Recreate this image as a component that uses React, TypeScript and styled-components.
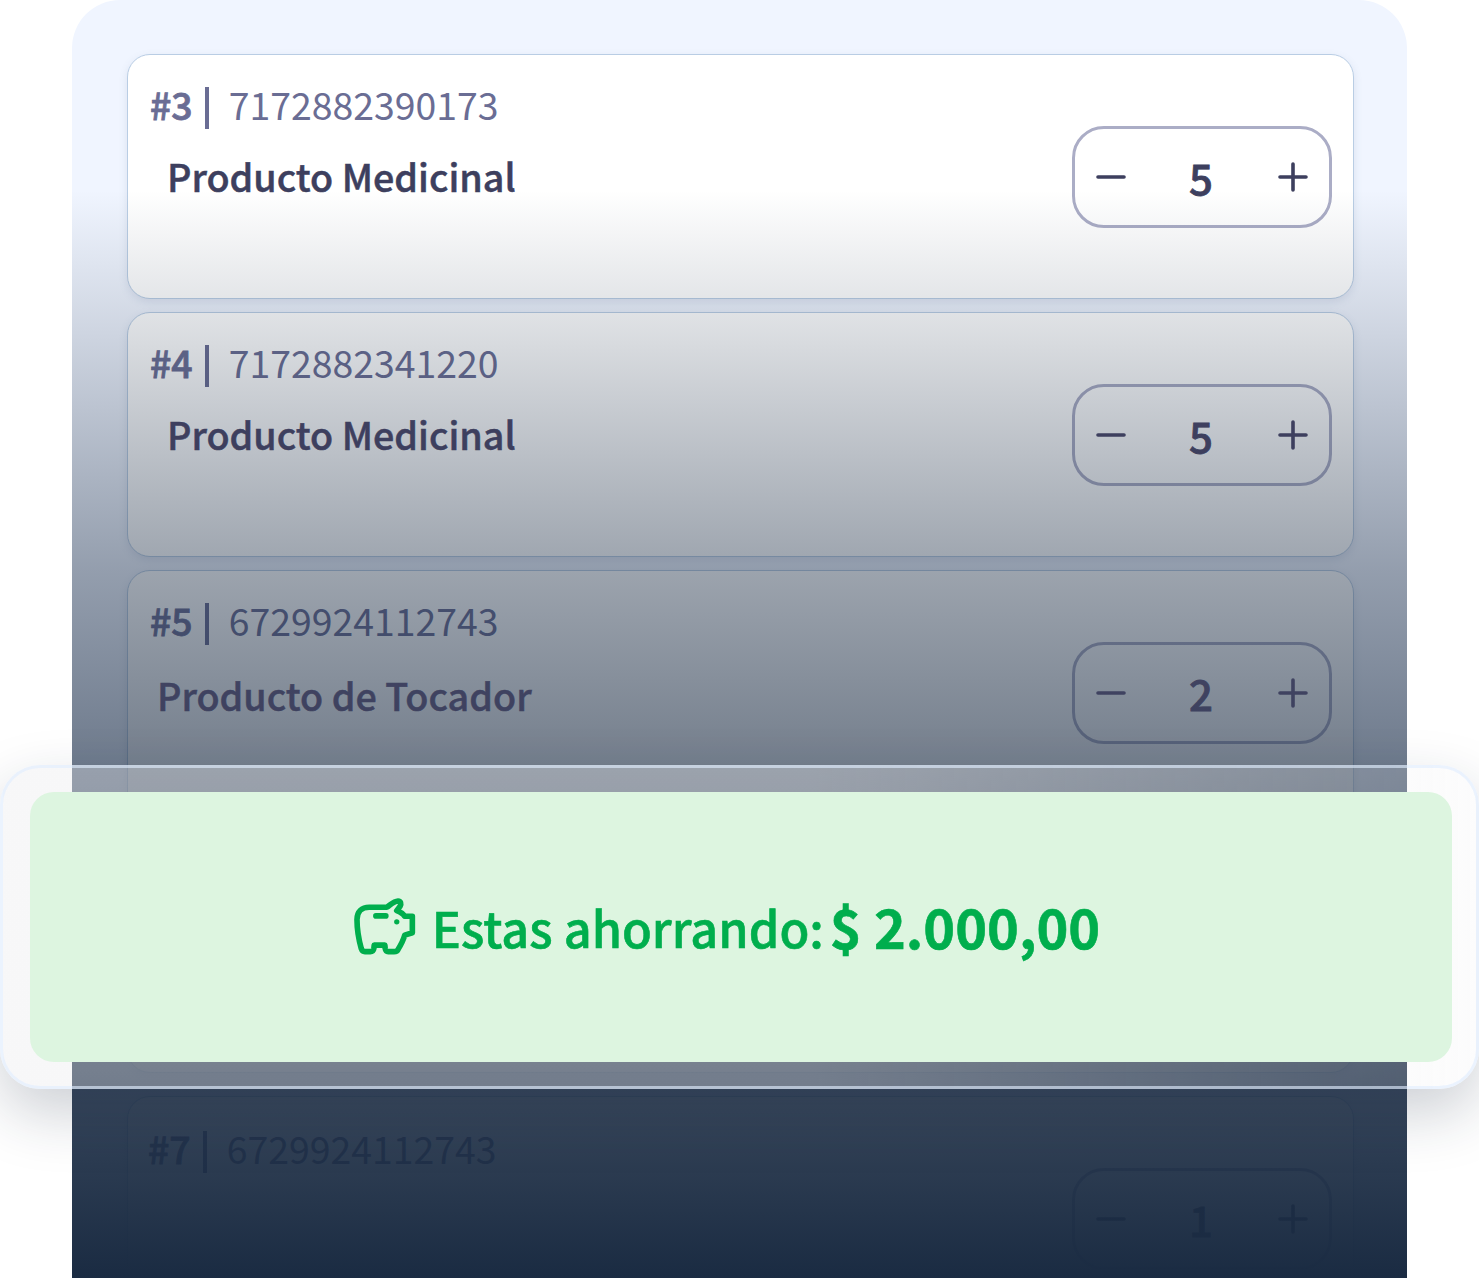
import React from "react";
import styled, { createGlobalStyle } from "styled-components";

const Global = createGlobalStyle`
  html, body { margin: 0; padding: 0; background: #fff; }
  body { font-family: "Noto Sans CJK SC", "Noto Sans", sans-serif; }
`;

const Page = styled.div`
  position: relative;
  width: 1479px;
  height: 1278px;
  overflow: hidden;
  background: #fff;
`;

const Panel = styled.main`
  position: relative;
  box-sizing: border-box;
  width: 1335px;
  height: 1278px;
  margin-left: 72px;
  padding: 54px 53px 0 55px;
  border-radius: 48px 48px 0 0;
  background: #f0f5ff;
  overflow: hidden;
  display: flex;
  flex-direction: column;
  gap: 13px;
`;

const Card = styled.article<{ $gapBelow?: number; $ink?: string }>`
  box-sizing: border-box;
  flex: none;
  width: 1227px;
  height: 245px;
  margin-bottom: ${(p) => p.$gapBelow ?? 0}px;
  padding: 22px 21px 0 22px;
  border: 1.5px solid #b9cde4;
  border-radius: 23px;
  background: #fff;
  box-shadow: 0 3px 8px rgba(90, 110, 150, 0.14);
  color: ${(p) => p.$ink ?? "#3d3f5e"};
  display: flex;
  justify-content: space-between;
`;

const Info = styled.div<{ $shift?: number }>`
  display: flex;
  flex-direction: column;
  transform: translate(${(p) => p.$shift ?? 0}px, ${(p) => (p.$shift ? 2 : 0)}px);
`;

const CodeRow = styled.div`
  display: flex;
  align-items: center;
  height: 54px;
  color: #6a6d94;
  font-size: 37.4px;
  line-height: 54px;
  white-space: nowrap;
`;

const Rank = styled.span`
  font-weight: 500;
  -webkit-text-stroke: 0.8px #6a6d94;
`;

const Divider = styled.span`
  width: 4px;
  height: 42px;
  margin: 7px 20px 0 12px;
  background: #6a6d94;
`;

const Title = styled.h3<{ $indent: number; $drop?: number }>`
  margin: ${(p) => 21 + (p.$drop ?? 0)}px 0 0 ${(p) => p.$indent}px;
  color: inherit;
  font-size: 37.7px;
  line-height: 48px;
  font-weight: 500;
  -webkit-text-stroke: 0.5px currentColor;
  white-space: nowrap;
`;

const Stepper = styled.div`
  box-sizing: border-box;
  flex: none;
  width: 260px;
  height: 102px;
  margin-top: 49px;
  padding: 0 20.5px;
  border: 3px solid #abadc6;
  border-radius: 32px;
  display: flex;
  align-items: center;
  justify-content: space-between;
`;

const Value = styled.span`
  margin-right: 2px;
  font-size: 42px;
  font-weight: 500;
  line-height: 1;
  -webkit-text-stroke: 0.8px currentColor;
`;

const StepIcon = styled.svg`
  display: block;
  width: 30px;
  height: 30px;
  stroke: currentColor;
  stroke-width: 3.6;
  stroke-linecap: round;
  fill: none;
`;

const Fade = styled.div`
  position: absolute;
  inset: 0;
  pointer-events: none;
  background: linear-gradient(
    180deg,
    rgba(26, 43, 66, 0) 190px,
    rgba(26, 43, 66, 0.12) 300px,
    rgba(26, 43, 66, 0.43) 570px,
    rgba(26, 43, 66, 0.6) 760px,
    rgba(26, 43, 66, 0.87) 1095px,
    rgba(26, 43, 66, 1) 1278px
  );
`;

const Banner = styled.aside`
  position: absolute;
  top: 765px;
  left: 0;
  box-sizing: border-box;
  width: 1479px;
  height: 324px;
  padding: 24px 24px 24px 27px;
  border: 3px solid rgba(225, 238, 255, 0.62);
  border-radius: 40px;
  background: linear-gradient(
    90deg,
    rgba(232, 232, 235, 0.34) 0%,
    rgba(232, 232, 235, 0.34) 55%,
    rgba(232, 232, 235, 0.13) 100%
  );
  box-shadow: 0 24px 60px rgba(26, 43, 66, 0.22);
`;

const Savings = styled.div`
  box-sizing: border-box;
  height: 270px;
  padding-right: 28px;
  border-radius: 24px;
  background: #ddf5e0;
  color: #00ae4d;
  display: flex;
  align-items: center;
  justify-content: center;
`;

const Piggy = styled.svg`
  flex: none;
  width: 62px;
  height: 58px;
  margin-right: 16px;
  stroke: currentColor;
  stroke-width: 17;
  stroke-linecap: round;
  stroke-linejoin: round;
  fill: none;
`;

const PiggyEye = styled.circle`
  fill: currentColor;
  stroke: none;
`;

const SavingsLabel = styled.span`
  font-size: 48.7px;
  line-height: 70px;
  font-weight: 500;
  -webkit-text-stroke: 0.6px currentColor;
  margin-right: 6px;
`;

const SavingsAmount = styled.strong`
  margin-top: -3px;
  font-size: 54px;
  line-height: 70px;
  font-weight: 700;
  -webkit-text-stroke: 0.6px currentColor;
`;

type Item = {
  id: string;
  code?: string;
  title?: string;
  indent?: number;
  drop?: number;
  qty?: string;
  shift?: number;
  gapBelow?: number;
  ink?: string;
};

const items: Item[] = [
  { id: "#3", code: "7172882390173", title: "Producto Medicinal", indent: 17, qty: "5" },
  { id: "#4", code: "7172882341220", title: "Producto Medicinal", indent: 17, qty: "5", ink: "#4b4769" },
  { id: "#5", code: "6729924112743", title: "Producto de Tocador", indent: 7, drop: 3, qty: "2", ink: "#6b5e84" },
  { id: "#6", gapBelow: 10 },
  { id: "#7", code: "6729924112743", qty: "1", shift: -2 },
];

export default function App() {
  return (
    <Page>
      <Global />
      <Panel>
        {items.map((item) => (
          <Card key={item.id} $gapBelow={item.gapBelow} $ink={item.ink}>
            {item.code && (
              <>
                <Info $shift={item.shift}>
                  <CodeRow>
                    <Rank>{item.id}</Rank>
                    <Divider />
                    <span>{item.code}</span>
                  </CodeRow>
                  {item.title && (
                    <Title $indent={item.indent ?? 0} $drop={item.drop}>
                      {item.title}
                    </Title>
                  )}
                </Info>
                <Stepper>
                  <StepIcon viewBox="0 0 30 30">
                    <path d="M2 15H28" />
                  </StepIcon>
                  <Value>{item.qty}</Value>
                  <StepIcon viewBox="0 0 30 30">
                    <path d="M2 15H28M15 2V28" />
                  </StepIcon>
                </Stepper>
              </>
            )}
          </Card>
        ))}
        <Fade />
      </Panel>
      <Banner>
        <Savings>
          <Piggy viewBox="40 50 185 175">
            <path d="M85 78H138C150 70 158 60 172 59C180 59 182 67 178 75L168 88C178 92 188 98 192 105H215V155L192 162C188 177 180 192 172 205C170 210 166 212 160 212H142C136 212 134 208 133 202L132 192H100L99 202C98 208 95 212 88 212H72C66 212 63 209 61 203C54 178 48 150 48 115C48 92 62 78 85 78Z" />
            <path d="M105 104H135" />
            <PiggyEye cx="168" cy="122" r="8" />
          </Piggy>
          <SavingsLabel>Estas ahorrando:</SavingsLabel>
          <SavingsAmount>$ 2.000,00</SavingsAmount>
        </Savings>
      </Banner>
    </Page>
  );
}
